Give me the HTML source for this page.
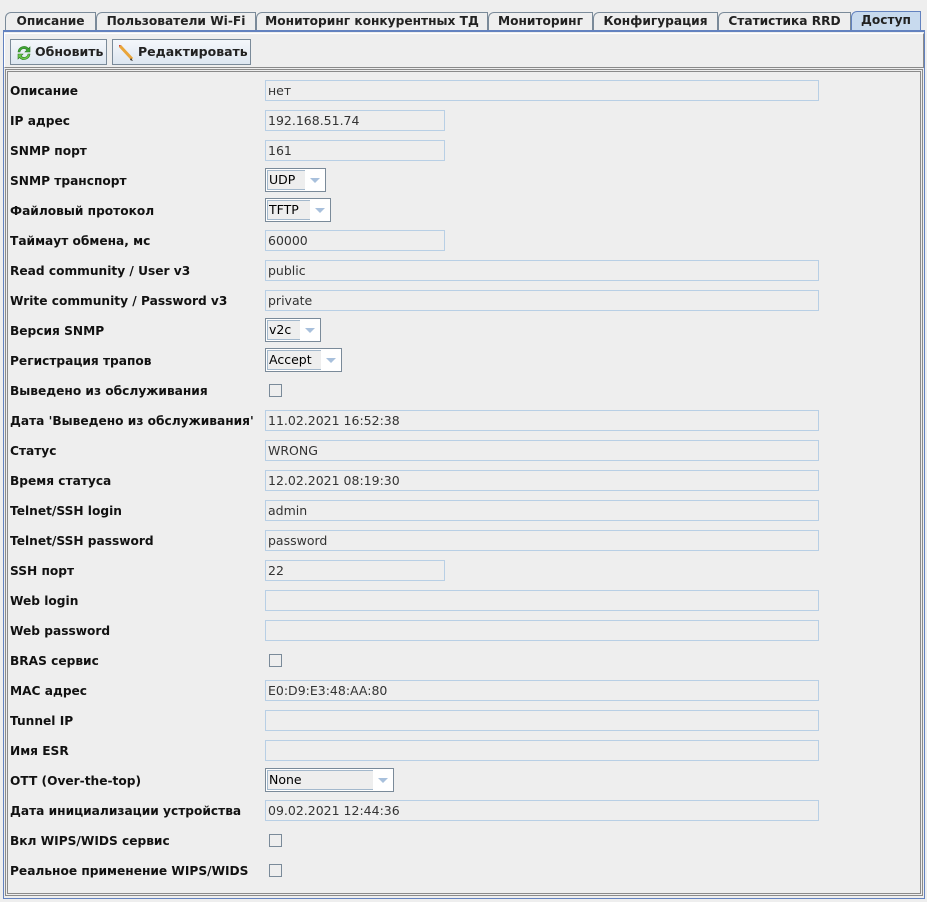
<!DOCTYPE html>
<html><head><meta charset="utf-8"><style>
*{box-sizing:border-box;margin:0;padding:0}
body{width:927px;height:902px;background:#eeeeee;position:relative;overflow:hidden;font-family:"DejaVu Sans","Liberation Sans",sans-serif;font-size:12px;color:#000}
.a{position:absolute}
.tab{position:absolute;top:12px;height:19px;border:1px solid #7a8a99;border-bottom:none;background:#eeeeee;font-weight:bold;font-size:12.2px;color:#222;text-align:center;line-height:17px;border-top-left-radius:6px 6px}
.tab.sel{background:#c8daee;border-color:#6382bf;top:11px;height:20px}
.lbl{position:absolute;left:10px;font-weight:bold;font-size:12.2px;color:#111;line-height:16px;top:1px}
.f{position:absolute;left:265px;height:21px;border:1px solid #b8cfe5;background:#eeeeee;color:#333;font-size:12.5px;line-height:19px;padding-left:2px}
.w{width:554px}.s{width:180px}
.cb{position:absolute;left:265px;height:24px;border:1px solid #7a8a99;background:#fff}
.cb .t{position:absolute;left:1px;top:1px;bottom:1px;border:1px solid #a3b8cc;background:#eeeeee;font-size:12.5px;line-height:18px;padding-left:1px;color:#000}
.cb .ar{position:absolute;right:0;top:0;width:20px;height:22px;background:#fff}
.cb .ar:after{content:"";position:absolute;left:5px;top:9px;border-left:5px solid transparent;border-right:5px solid transparent;border-top:5px solid #a8c0dc}
.chk{position:absolute;left:269px;width:13px;height:13px;border:1px solid #7a8a99;background:#eeeeee}
.btn{position:absolute;top:39px;height:26px;border:1px solid #7a8a99;background:linear-gradient(#f4f7fb,#dde6f0);font-weight:bold;font-size:12.5px;line-height:24px;color:#222}
</style></head><body>
<div class="tab" style="left:5px;width:91px">Описание</div>
<div class="tab" style="left:96px;width:160px">Пользователи Wi-Fi</div>
<div class="tab" style="left:256px;width:232px">Мониторинг конкурентных ТД</div>
<div class="tab" style="left:488px;width:105px">Мониторинг</div>
<div class="tab" style="left:593px;width:125px">Конфигурация</div>
<div class="tab" style="left:718px;width:133px">Статистика RRD</div>
<div class="tab sel" style="left:851px;width:70px">Доступ</div>
<div class="a" style="left:3px;top:30px;width:922px;height:869px;border:1px solid #6382bf;border-top:2px solid #6382bf"></div>
<div class="a" style="left:4px;top:33px;width:920px;height:35px;border:1px solid #8a8a8a;border-top-color:#fff;border-left-color:#fff"></div>
<div class="btn" style="left:10px;width:97px"><svg class="a" style="left:5px;top:5px" width="16" height="16" viewBox="0 0 16 16"><path d="M2 7a6 6 0 0 1 10.5-3.5L14 2v5H9l2-2A4 4 0 0 0 4 7z" fill="#3fa535" stroke="#2a7a22" stroke-width=".6"/><path d="M14 9a6 6 0 0 1-10.5 3.5L2 14V9h5l-2 2a4 4 0 0 0 7-2z" fill="#6cc84a" stroke="#2a7a22" stroke-width=".6"/></svg><span class="a" style="left:24px">Обновить</span></div>
<div class="btn" style="left:112px;width:139px"><svg class="a" style="left:4px;top:4px" width="18" height="18" viewBox="0 0 18 18"><path d="M3 2l12 13" stroke="#e9a53a" stroke-width="3"/><path d="M2 1l2 0 -2 2z" fill="#d04040"/><path d="M14 14l2 3-3-1z" fill="#333"/></svg><span class="a" style="left:25px">Редактировать</span></div>
<div class="a" style="left:5px;top:69px;width:918px;height:827px;border:3px double #8a8a8a"></div>

<div class="lbl" style="top:83px">Описание</div><div class="f w" style="top:80px">нет</div>
<div class="lbl" style="top:113px">IP адрес</div><div class="f s" style="top:110px">192.168.51.74</div>
<div class="lbl" style="top:143px">SNMP порт</div><div class="f s" style="top:140px">161</div>
<div class="lbl" style="top:173px">SNMP транспорт</div><div class="cb" style="top:168px;width:61px"><div class="t" style="width:40px">UDP</div><div class="ar"></div></div>
<div class="lbl" style="top:203px">Файловый протокол</div><div class="cb" style="top:198px;width:66px"><div class="t" style="width:45px">TFTP</div><div class="ar"></div></div>
<div class="lbl" style="top:233px">Таймаут обмена, мс</div><div class="f s" style="top:230px">60000</div>
<div class="lbl" style="top:263px">Read community / User v3</div><div class="f w" style="top:260px">public</div>
<div class="lbl" style="top:293px">Write community / Password v3</div><div class="f w" style="top:290px">private</div>
<div class="lbl" style="top:323px">Версия SNMP</div><div class="cb" style="top:318px;width:56px"><div class="t" style="width:35px">v2c</div><div class="ar"></div></div>
<div class="lbl" style="top:353px">Регистрация трапов</div><div class="cb" style="top:348px;width:77px"><div class="t" style="width:56px">Accept</div><div class="ar"></div></div>
<div class="lbl" style="top:383px">Выведено из обслуживания</div><div class="chk" style="top:384px"></div>
<div class="lbl" style="top:413px">Дата 'Выведено из обслуживания'</div><div class="f w" style="top:410px">11.02.2021 16:52:38</div>
<div class="lbl" style="top:443px">Статус</div><div class="f w" style="top:440px">WRONG</div>
<div class="lbl" style="top:473px">Время статуса</div><div class="f w" style="top:470px">12.02.2021 08:19:30</div>
<div class="lbl" style="top:503px">Telnet/SSH login</div><div class="f w" style="top:500px">admin</div>
<div class="lbl" style="top:533px">Telnet/SSH password</div><div class="f w" style="top:530px">password</div>
<div class="lbl" style="top:563px">SSH порт</div><div class="f s" style="top:560px">22</div>
<div class="lbl" style="top:593px">Web login</div><div class="f w" style="top:590px"></div>
<div class="lbl" style="top:623px">Web password</div><div class="f w" style="top:620px"></div>
<div class="lbl" style="top:653px">BRAS сервис</div><div class="chk" style="top:654px"></div>
<div class="lbl" style="top:683px">MAC адрес</div><div class="f w" style="top:680px">E0:D9:E3:48:AA:80</div>
<div class="lbl" style="top:713px">Tunnel IP</div><div class="f w" style="top:710px"></div>
<div class="lbl" style="top:743px">Имя ESR</div><div class="f w" style="top:740px"></div>
<div class="lbl" style="top:773px">OTT (Over-the-top)</div><div class="cb" style="top:768px;width:129px"><div class="t" style="width:108px">None</div><div class="ar"></div></div>
<div class="lbl" style="top:803px">Дата инициализации устройства</div><div class="f w" style="top:800px">09.02.2021 12:44:36</div>
<div class="lbl" style="top:833px">Вкл WIPS/WIDS сервис</div><div class="chk" style="top:834px"></div>
<div class="lbl" style="top:863px">Реальное применение WIPS/WIDS</div><div class="chk" style="top:864px"></div>
</body></html>
